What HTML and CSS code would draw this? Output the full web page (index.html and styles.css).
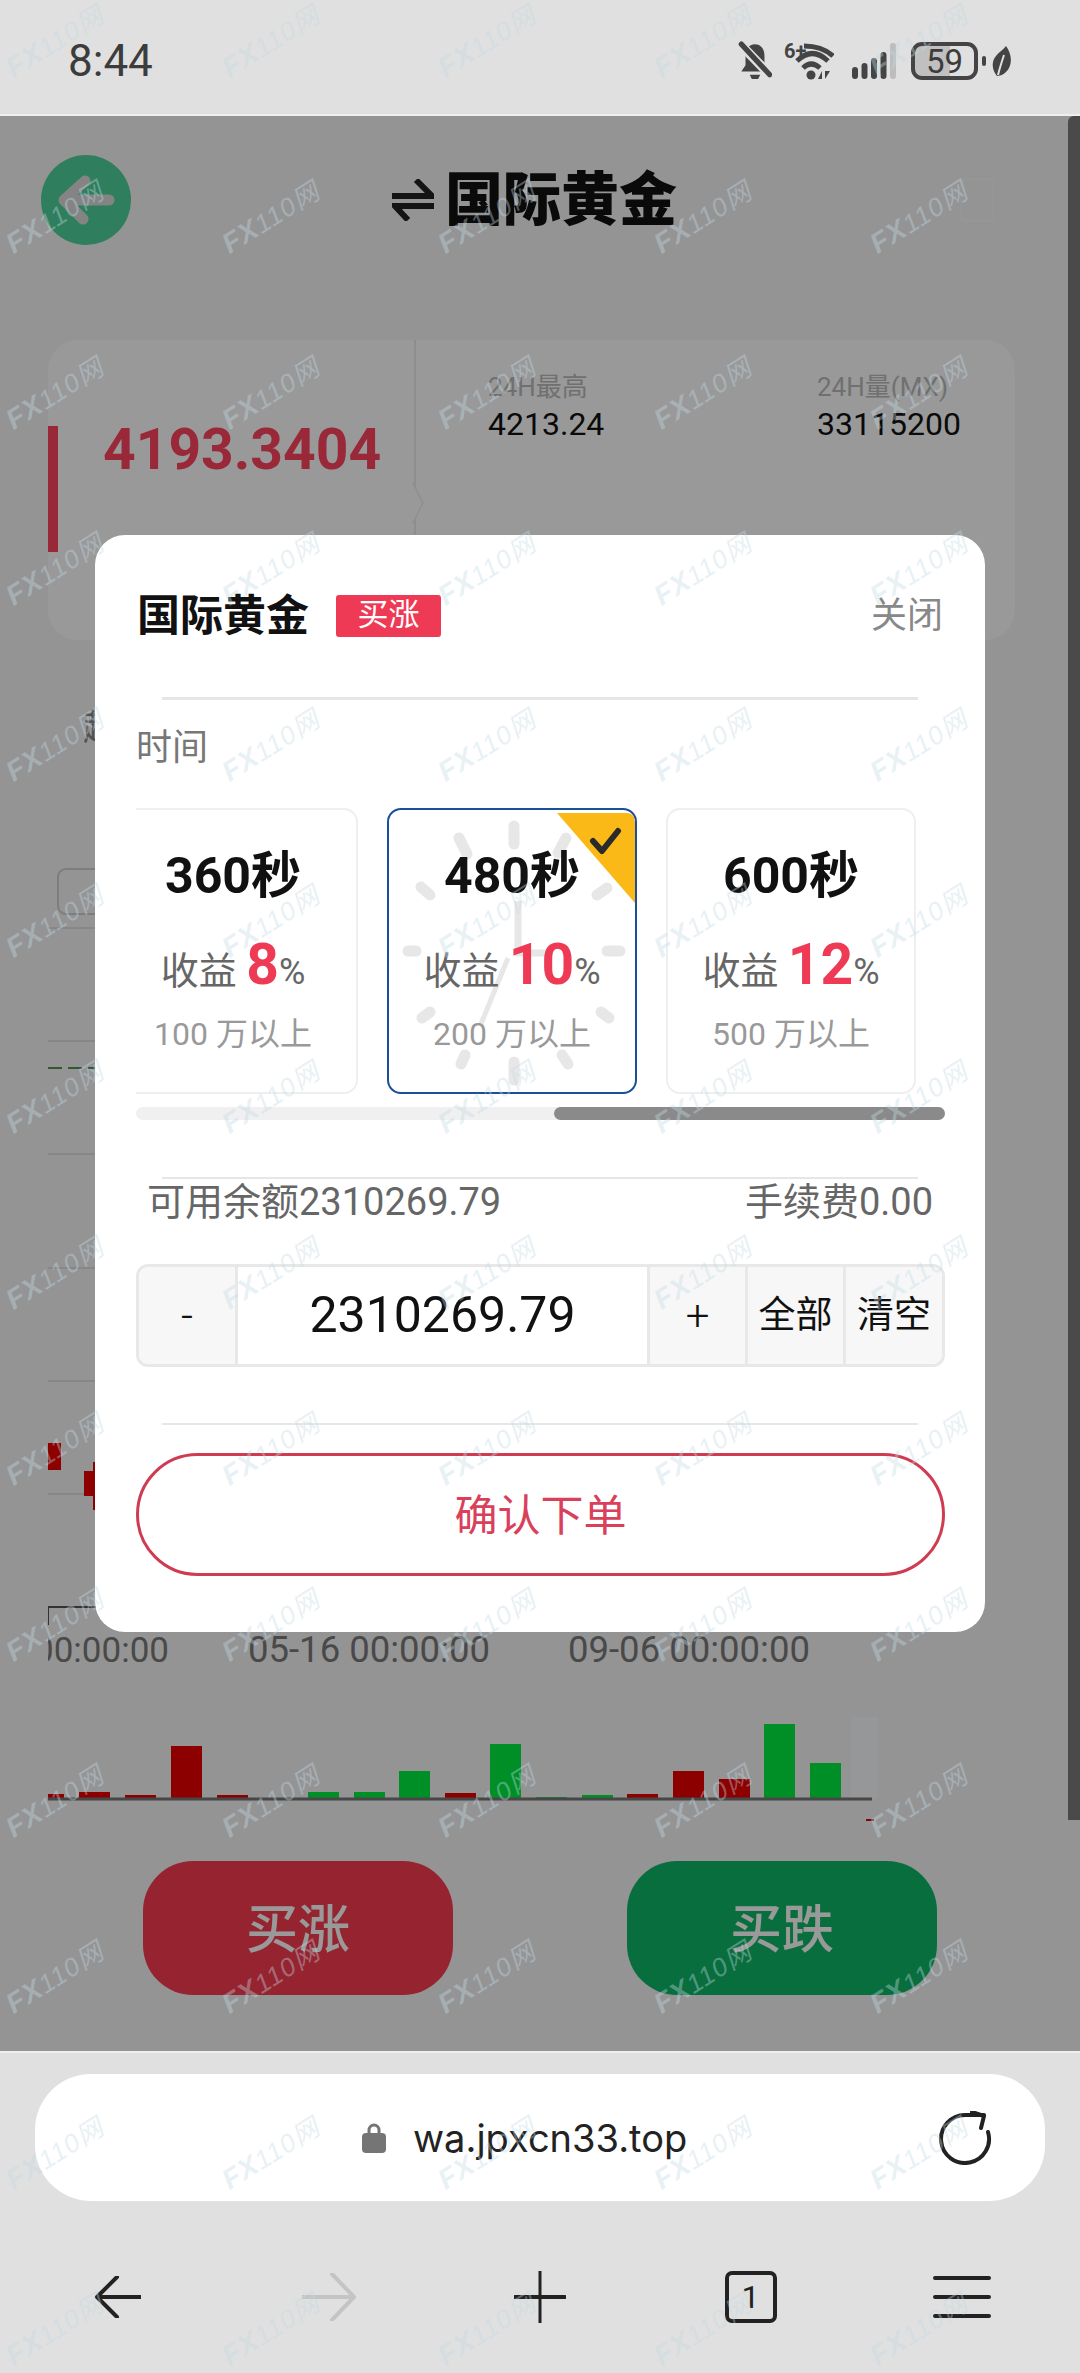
FILE: index.html
```html
<!DOCTYPE html>
<html lang="zh">
<head>
  <meta charset="UTF-8">
  <title>国际黄金</title>
  <link rel="stylesheet" href="styles.css">
</head>
<body>
<div class="phone">

  <div class="status">
    <span class="clock">8:44</span>
    <div class="status-icons">
      <svg class="ic-bell" width="34" height="40" viewBox="0 0 32 38">
        <path d="M16 3c-6 0-9 5-9 11v9l-4 6h26l-4-6v-9c0-6-3-11-9-11z" fill="#444"/>
        <path d="M11 32h10l-2 4h-6z" fill="#444"/>
        <path d="M2 3l28 29" stroke="#e0e0e0" stroke-width="9"/>
        <path d="M3 3l27 29" stroke="#444" stroke-width="5" stroke-linecap="round"/>
      </svg>
      <div class="wifi">
        <span class="wifi-six">6+</span>
        <svg width="50" height="38" viewBox="0 0 50 38" fill="none" stroke="#444" stroke-width="5">
          <path d="M20 4Q38 4 49 14"/>
          <path d="M13 19Q28 4 44 19"/>
          <path d="M19 26Q27 18 36 26"/>
          <circle cx="27" cy="33" r="4.500" fill="#444" stroke="none"/>
          <path d="M34 37L38 29V37z" fill="#444" stroke="none"/>
          <path d="M41 29V37L46 29z" fill="#444" stroke="none"/>
        </svg>
      </div>
      <svg class="ic-signal" width="44" height="36" viewBox="0 0 44 36">
        <rect x="0" y="24" width="6" height="12" rx="3" fill="#444"/>
        <rect x="9.500" y="20" width="6" height="16" rx="3" fill="#444"/>
        <rect x="19" y="15" width="6" height="21" rx="3" fill="#444"/>
        <rect x="28.500" y="9" width="6" height="27" rx="3" fill="#444"/>
        <rect x="38" y="0" width="6" height="36" rx="3" fill="#bdbdbd"/>
      </svg>
      <div class="battery"><span>59</span></div>
      <span class="battery-nub"></span>
      <svg class="ic-leaf" width="20" height="30" viewBox="0 0 20 30">
        <path d="M14 0c6 8 7 19 0 26-3 3-7 4-9 4-5-6-6-14-1-20 3-4 7-6 10-10z" fill="#444"/>
        <path d="M12 9c-2 6-4 12-6 20" stroke="#e0e0e0" stroke-width="2" fill="none"/>
      </svg>
    </div>
  </div>

  <div class="page">
    <div class="topbar">
      <div class="back-btn">
        <svg width="90" height="90" viewBox="0 0 90 90" fill="none" stroke="#dcdcdc" stroke-width="11" stroke-linecap="round" stroke-linejoin="round">
          <path d="M68 45H24"/>
          <path d="M44 26L23 45l19 19"/>
        </svg>
      </div>
      <h1 class="page-title">
        <svg width="42" height="42" viewBox="0 0 42 42" fill="none" stroke="#222" stroke-width="6">
          <path d="M0 17h40L24 1"/>
          <path d="M42 27H3l13 14"/>
        </svg>
        国际黄金
      </h1>
      <span class="fav-icon"></span>
    </div>

    <div class="market">
      <div class="market-left">
        <span class="price-bar"></span>
        <span class="price">4193.3404</span>
      </div>
      <div class="market-stats">
        <div class="stat stat-high">
          <span class="stat-label">24H最高</span>
          <span class="stat-value">4213.24</span>
        </div>
        <div class="stat">
          <span class="stat-label">24H量(MX)</span>
          <span class="stat-value">33115200</span>
        </div>
      </div>
    </div>

    <div class="chart-label">超</div>

    <svg class="chart" width="830" height="980" viewBox="0 0 830 980">
      <rect x="10" y="19" width="200" height="45" rx="8" fill="none" stroke="#d0d0d0" stroke-width="2"/>
      <g stroke="#e2e2e2" stroke-width="2">
        <path d="M0 78H830"/><path d="M0 191H830"/><path d="M0 304H830"/>
        <path d="M0 418H830"/><path d="M0 531H830"/><path d="M0 644H830"/>
      </g>
      <path d="M0 218H200" stroke="#4d9a4d" stroke-width="2" stroke-dasharray="14 6"/>
      <g fill="#ea0000">
        <rect x="0" y="593" width="13" height="27"/>
        <rect x="36" y="621" width="11" height="25"/>
        <rect x="45" y="612" width="2" height="48"/>
      </g>
      <path d="M0 775V757H200" stroke="#555" stroke-width="2" fill="none"/>
      <g class="chart-dates">
        <text class="chart-date-cut" x="121" y="812" text-anchor="end">00:00:00</text>
        <text x="200" y="812">05-16 00:00:00</text>
        <text x="520" y="812">09-06 00:00:00</text>
      </g>
      <rect x="803" y="867" width="43" height="82" fill="#fbfcff"/>
      <g fill="#ea0000">
        <rect x="0" y="944" width="16" height="5"/>
        <rect x="31" y="942" width="31" height="7"/>
        <rect x="77" y="945" width="31" height="4"/>
        <rect x="123" y="896" width="31" height="53"/>
        <rect x="169" y="945" width="31" height="4"/>
        <rect x="397" y="943" width="31" height="6"/>
        <rect x="579" y="944" width="31" height="5"/>
        <rect x="625" y="921" width="31" height="28"/>
        <rect x="671" y="929" width="31" height="20"/>
        <rect x="818" y="969" width="8" height="2"/>
      </g>
      <g fill="#00ee42">
        <rect x="260" y="942" width="31" height="7"/>
        <rect x="306" y="942" width="31" height="7"/>
        <rect x="351" y="921" width="31" height="28"/>
        <rect x="442" y="894" width="31" height="55"/>
        <rect x="488" y="947" width="31" height="2"/>
        <rect x="534" y="945" width="31" height="4"/>
        <rect x="716" y="874" width="31" height="75"/>
        <rect x="762" y="913" width="31" height="36"/>
      </g>
      <path d="M0 949H824" stroke="#777" stroke-width="3"/>
    </svg>

    <div class="trade-btns">
      <button class="trade-btn trade-up">买涨</button>
      <button class="trade-btn trade-down">买跌</button>
    </div>

    <div class="mask"></div>
    <span class="page-scroll"></span>

    <div class="modal">
      <div class="modal-head">
        <span class="modal-title">国际黄金</span>
        <span class="modal-tag">买涨</span>
        <span class="modal-close">关闭</span>
      </div>
      <div class="rule"></div>
      <div class="time-label">时间</div>

      <div class="periods">
        <div class="period period-first">
          <div class="period-time">360秒</div>
          <div class="period-rate">收益 <b>8</b><small>%</small></div>
          <div class="period-min">100 万以上</div>
        </div>
        <div class="period period-on">
          <svg class="period-bg" width="246" height="282" viewBox="0 0 246 282">
            <g stroke="#e7e7e7" stroke-width="11" stroke-linecap="round" fill="none">
              <path d="M125 16V34"/><path d="M125 252V270"/>
              <path d="M19 141H27"/><path d="M218 141H231"/>
              <path d="M70 28L78 44"/><path d="M32 77L41 85"/>
              <path d="M208 85L218 78"/><path d="M177 28L169 43"/>
              <path d="M33 208L41 202"/><path d="M212 202L220 208"/>
              <path d="M76 245L72 254"/><path d="M173 245L179 254"/>
            </g>
            <g stroke="#e7e7e7" fill="none">
              <path d="M129 91V143H160" stroke-width="7"/>
              <path d="M119 148L92 214" stroke-width="5"/>
            </g>
            <path d="M168 3H238a8 8 0 0 1 8 8V93z" fill="#fbb917"/>
            <path d="M204 31l9 10 16-20" fill="none" stroke="#2a2a2a" stroke-width="6" stroke-linecap="round" stroke-linejoin="round"/>
          </svg>
          <div class="period-time">480秒</div>
          <div class="period-rate">收益 <b>10</b><small>%</small></div>
          <div class="period-min">200 万以上</div>
        </div>
        <div class="period">
          <div class="period-time">600秒</div>
          <div class="period-rate">收益 <b>12</b><small>%</small></div>
          <div class="period-min">500 万以上</div>
        </div>
      </div>
      <div class="periods-track"><span class="periods-thumb"></span></div>

      <div class="rule rule-thin rule-funds"></div>
      <div class="funds">
        <span>可用余额2310269.79</span>
        <span>手续费0.00</span>
      </div>

      <div class="amount">
        <span class="amount-btn amount-sign">-</span>
        <span class="amount-value">2310269.79</span>
        <span class="amount-btn amount-sign">+</span>
        <span class="amount-btn">全部</span>
        <span class="amount-btn">清空</span>
      </div>

      <div class="rule rule-thin rule-confirm"></div>
      <button class="confirm">确认下单</button>
    </div>
  </div>

  <div class="browser">
    <div class="urlbar">
      <svg width="24" height="30" viewBox="0 0 24 30">
        <path d="M7 13V7a5 5 0 0 1 10 0v6" fill="none" stroke="#757575" stroke-width="3"/>
        <rect x="0" y="10" width="24" height="20" rx="4" fill="#757575"/>
      </svg>
      <span class="url">wa.jpxcn33.top</span>
      <svg class="reload" width="54" height="54" viewBox="0 0 54 54" fill="none" stroke="#222" stroke-width="4" stroke-linecap="round" stroke-linejoin="round">
        <path d="M50 21A24 24 0 1 1 27 4H46"/>
        <path d="M34 1L46 5L43 17"/>
      </svg>
    </div>
    <div class="toolbar">
      <svg width="46" height="42" viewBox="0 0 46 42" fill="none" stroke="#222" stroke-width="4" stroke-linecap="round" stroke-linejoin="round">
        <path d="M46 21H3"/><path d="M22 1L2 21l20 20"/>
      </svg>
      <svg width="54" height="48" viewBox="0 0 54 48" fill="none" stroke="#c4c4c4" stroke-width="4" stroke-linecap="round" stroke-linejoin="round">
        <path d="M0 24H51"/><path d="M30 1l22 23-22 23"/>
      </svg>
      <svg width="52" height="52" viewBox="0 0 52 52" fill="none" stroke="#222" stroke-linecap="round">
        <path d="M26 0V52" stroke-width="3"/><path d="M1 26H51" stroke-width="4"/>
      </svg>
      <div class="tab-count">1</div>
      <svg width="58" height="44" viewBox="0 0 58 44" fill="none" stroke="#222" stroke-width="4" stroke-linecap="round">
        <path d="M2 3H56"/><path d="M2 22H56"/><path d="M2 41H56"/>
      </svg>
    </div>
  </div>

  <div class="watermarks">
    <span class="wm"><b>FX</b>110网</span><span class="wm"><b>FX</b>110网</span><span class="wm"><b>FX</b>110网</span><span class="wm"><b>FX</b>110网</span><span class="wm"><b>FX</b>110网</span>
    <span class="wm"><b>FX</b>110网</span><span class="wm"><b>FX</b>110网</span><span class="wm"><b>FX</b>110网</span><span class="wm"><b>FX</b>110网</span><span class="wm"><b>FX</b>110网</span>
    <span class="wm"><b>FX</b>110网</span><span class="wm"><b>FX</b>110网</span><span class="wm"><b>FX</b>110网</span><span class="wm"><b>FX</b>110网</span><span class="wm"><b>FX</b>110网</span>
    <span class="wm"><b>FX</b>110网</span><span class="wm"><b>FX</b>110网</span><span class="wm"><b>FX</b>110网</span><span class="wm"><b>FX</b>110网</span><span class="wm"><b>FX</b>110网</span>
    <span class="wm"><b>FX</b>110网</span><span class="wm"><b>FX</b>110网</span><span class="wm"><b>FX</b>110网</span><span class="wm"><b>FX</b>110网</span><span class="wm"><b>FX</b>110网</span>
    <span class="wm"><b>FX</b>110网</span><span class="wm"><b>FX</b>110网</span><span class="wm"><b>FX</b>110网</span><span class="wm"><b>FX</b>110网</span><span class="wm"><b>FX</b>110网</span>
    <span class="wm"><b>FX</b>110网</span><span class="wm"><b>FX</b>110网</span><span class="wm"><b>FX</b>110网</span><span class="wm"><b>FX</b>110网</span><span class="wm"><b>FX</b>110网</span>
    <span class="wm"><b>FX</b>110网</span><span class="wm"><b>FX</b>110网</span><span class="wm"><b>FX</b>110网</span><span class="wm"><b>FX</b>110网</span><span class="wm"><b>FX</b>110网</span>
    <span class="wm"><b>FX</b>110网</span><span class="wm"><b>FX</b>110网</span><span class="wm"><b>FX</b>110网</span><span class="wm"><b>FX</b>110网</span><span class="wm"><b>FX</b>110网</span>
    <span class="wm"><b>FX</b>110网</span><span class="wm"><b>FX</b>110网</span><span class="wm"><b>FX</b>110网</span><span class="wm"><b>FX</b>110网</span><span class="wm"><b>FX</b>110网</span>
    <span class="wm"><b>FX</b>110网</span><span class="wm"><b>FX</b>110网</span><span class="wm"><b>FX</b>110网</span><span class="wm"><b>FX</b>110网</span><span class="wm"><b>FX</b>110网</span>
    <span class="wm"><b>FX</b>110网</span><span class="wm"><b>FX</b>110网</span><span class="wm"><b>FX</b>110网</span><span class="wm"><b>FX</b>110网</span><span class="wm"><b>FX</b>110网</span>
    <span class="wm"><b>FX</b>110网</span><span class="wm"><b>FX</b>110网</span><span class="wm"><b>FX</b>110网</span><span class="wm"><b>FX</b>110网</span><span class="wm"><b>FX</b>110网</span>
    <span class="wm"><b>FX</b>110网</span><span class="wm"><b>FX</b>110网</span><span class="wm"><b>FX</b>110网</span><span class="wm"><b>FX</b>110网</span><span class="wm"><b>FX</b>110网</span>
  </div>

</div>
</body>
</html>
```

FILE: styles.css
```css
* {
  box-sizing: border-box;
}
body {
  margin: 0;
  font-family: Roboto, "Noto Sans CJK SC", sans-serif;
  color: #111;
}
button {
  font-family: inherit;
  border: none;
  padding: 0;
}
.phone {
  position: relative;
  width: 1080px;
  height: 2373px;
  overflow: hidden;
  display: flex;
  flex-direction: column;
  background: #e0e0e0;
}

/* status bar */
.status {
  flex: none;
  height: 116px;
  border-bottom: 2px solid #efefef;
  padding: 8px 68px 0;
  display: flex;
  justify-content: space-between;
  align-items: center;
}
.clock {
  font-size: 44px;
  color: #3c3c3c;
}
.status-icons {
  display: flex;
  align-items: center;
}
.wifi {
  display: flex;
  align-items: flex-start;
  margin-left: 12px;
  position: relative;
  width: 50px;
  height: 38px;
}
.wifi-six {
  position: absolute;
  left: 0;
  top: -3px;
  font-size: 20px;
  font-weight: 700;
  color: #444;
}
.ic-signal {
  margin-left: 18px;
}
.battery {
  width: 67px;
  height: 38px;
  margin-left: 15px;
  border: 4px solid #444;
  border-radius: 11px;
  background: linear-gradient(90deg, #c0c0c0 59%, transparent 59%);
  display: flex;
  align-items: center;
  justify-content: center;
  font-size: 33px;
  color: #3c3c3c;
}
.battery-nub {
  width: 4px;
  height: 10px;
  margin-left: 4px;
  border-radius: 2px;
  background: #444;
}
.ic-leaf {
  margin-left: 6px;
}

/* page under the dialog */
.page {
  position: relative;
  flex: none;
  height: 1935px;
  background: #f7f7f8;
  padding-top: 39px;
}
.topbar {
  display: flex;
  align-items: center;
  height: 90px;
  padding-left: 41px;
}
.back-btn {
  width: 90px;
  height: 90px;
  border-radius: 50%;
  background: #4fd39c;
}
.page-title {
  margin: 0 0 0 261px;
  font-size: 58px;
  line-height: 70px;
  font-weight: 900;
  display: flex;
  align-items: center;
  gap: 11px;
}
.fav-icon {
  width: 34px;
  height: 44px;
  margin-left: 283px;
  border: 2px solid #fbfbfb;
  border-radius: 6px;
}
.market {
  display: flex;
  width: 967px;
  height: 300px;
  margin: 95px 0 0 48px;
  background: #fff;
  border-radius: 30px;
}
.market-left {
  position: relative;
  width: 368px;
  border-right: 2px solid #ededed;
  display: flex;
}
.market-left::after {
  content: "";
  position: absolute;
  right: -14px;
  top: 148px;
  width: 28px;
  height: 28px;
  background: #fff;
  border-top: 2px solid #ededed;
  border-right: 2px solid #ededed;
  transform: scaleX(.5) rotate(45deg);
}
.price-bar {
  width: 10px;
  height: 126px;
  margin-top: 86px;
  background: #ff4460;
}
.price {
  margin: 74px 0 0 45px;
  font-size: 57px;
  line-height: 72px;
  font-weight: 700;
  color: #ff4460;
}
.market-stats {
  display: flex;
  padding: 28px 0 0 72px;
}
.stat {
  display: flex;
  flex-direction: column;
}
.stat-high {
  width: 329px;
}
.stat-label {
  font-size: 26px;
  line-height: 38px;
  color: #bbb;
}
.stat-value {
  font-size: 32px;
  line-height: 36px;
}
.chart-label {
  margin: 68px 0 0 83px;
  font-size: 36px;
  line-height: 40px;
  color: #888;
}
.chart {
  display: block;
  margin: 102px 0 0 48px;
}
.chart-dates {
  font-size: 36.500px;
  fill: #7b7b7b;
}
.chart-date-cut {
  font-size: 35px;
}
.trade-btns {
  display: flex;
  gap: 174px;
  margin: 31px 0 0 143px;
}
.trade-btn {
  width: 310px;
  height: 134px;
  padding-bottom: 6px;
  border-radius: 50px;
  font-size: 52px;
  font-weight: 500;
  color: #fff;
}
.trade-up {
  background: #f83c50;
}
.trade-down {
  background: #10b768;
}
.mask {
  position: absolute;
  inset: 0;
  background: rgba(0, 0, 0, .4);
}
.page-scroll {
  position: absolute;
  right: 0;
  top: 0;
  width: 12px;
  height: 1704px;
  border-radius: 6px 0 0 0;
  background: #4a4a4a;
}

/* order dialog */
.modal {
  position: absolute;
  left: 95px;
  top: 419px;
  width: 890px;
  height: 1097px;
  background: #fff;
  border-radius: 30px;
}
.modal-head {
  display: flex;
  align-items: center;
  height: 162px;
  padding: 0 42px 8px;
}
.modal-title {
  font-size: 43px;
  font-weight: 700;
}
.modal-tag {
  margin: 8px 0 0 27px;
  width: 105px;
  height: 42px;
  line-height: 40px;
  text-align: center;
  border-radius: 3px;
  background: #ef3a55;
  color: #fff;
  font-size: 31px;
}
.modal-close {
  margin-left: auto;
  font-size: 36px;
  color: #888;
}
.rule {
  height: 3px;
  margin: 0 67px;
  background: #e6e6e6;
}
.rule-thin {
  height: 2px;
}
.rule-funds {
  margin-top: 57px;
}
.rule-confirm {
  margin-top: 56px;
}
.time-label {
  height: 94px;
  line-height: 96px;
  padding-left: 41px;
  font-size: 36px;
  color: #777;
}
.periods {
  display: flex;
  gap: 29px;
  width: 809px;
  margin: 14px 0 0 41px;
  overflow: hidden;
}
.period {
  position: relative;
  flex: none;
  width: 250px;
  height: 286px;
  border: 2px solid #efefef;
  border-radius: 14px;
  text-align: center;
  overflow: hidden;
}
.period-first {
  margin-left: -28px;
}
.period-on {
  border-color: #1a4f9c;
}
.period-bg {
  position: absolute;
  left: 0;
  top: 0;
}
.period-time,
.period-rate,
.period-min {
  position: relative;
}
.period-time {
  margin-top: 38px;
  font-size: 50px;
  line-height: 56px;
  font-weight: 700;
}
.period-rate {
  margin-top: 26px;
  font-size: 38px;
  line-height: 70px;
  color: #666;
  white-space: nowrap;
}
.period-rate b {
  font-size: 57px;
  color: #ef3a55;
}
.period-rate small {
  font-size: 36px;
}
.period-min {
  margin-top: 7px;
  font-size: 32px;
  line-height: 40px;
  color: #999;
}
.periods-track {
  height: 13px;
  margin: 13px 0 0 41px;
  width: 809px;
  border-radius: 7px;
  background: #f0f0f0;
  display: flex;
}
.periods-thumb {
  width: 391px;
  margin-left: 418px;
  border-radius: 7px;
  background: #8a8a8a;
}
.funds {
  display: flex;
  justify-content: space-between;
  height: 42px;
  line-height: 46px;
  padding: 0 52px;
  font-size: 38px;
  color: #666;
}
.amount {
  display: grid;
  grid-template-columns: 99px 409px 98px 98px 1fr;
  height: 103px;
  margin: 43px 40px 0 41px;
  border: 3px solid #e8e8e8;
  border-radius: 12px;
  overflow: hidden;
  text-align: center;
  line-height: 97px;
}
.amount-btn {
  background: #f7f7f7;
  font-size: 37px;
  border-left: 3px solid #e8e8e8;
}
.amount-btn:first-child {
  border-left: none;
  border-right: 3px solid #e8e8e8;
}
.amount-sign {
  font-size: 42px;
  font-weight: 300;
}
.amount-value {
  font-size: 50px;
}
.confirm {
  display: block;
  width: 809px;
  height: 123px;
  margin: 28px 41px 0;
  padding-bottom: 6px;
  background: #fff;
  border: 3px solid #cf3c52;
  border-radius: 62px;
  font-size: 43px;
  color: #d9405a;
}

/* browser chrome */
.browser {
  flex: 1;
  border-top: 2px solid #efefef;
}
.urlbar {
  display: flex;
  align-items: center;
  height: 127px;
  margin: 21px 35px 0;
  padding-left: 327px;
  border-radius: 56px;
  background: #fff;
}
.url {
  margin-left: 27px;
  font-family: Inter, Roboto, sans-serif;
  font-size: 38px;
  color: #222;
}
.reload {
  margin-left: auto;
  margin-right: 53px;
}
.toolbar {
  display: grid;
  grid-template-columns: repeat(5, 211px);
  justify-items: center;
  align-items: center;
  height: 52px;
  margin: 70px 0 0 12px;
}
.tab-count {
  width: 52px;
  height: 52px;
  border: 4px solid #222;
  border-radius: 7px;
  text-align: center;
  font-size: 32px;
  line-height: 44px;
  color: #222;
}

/* watermark over everything */
.watermarks {
  position: absolute;
  left: -54px;
  top: -49px;
  display: grid;
  grid-template-columns: repeat(5, 216px);
  grid-auto-rows: 176px;
  place-items: center;
  pointer-events: none;
}
.wm {
  transform: rotate(-32deg);
  font-family: "Liberation Sans", "Noto Sans CJK SC", sans-serif;
  font-size: 26px;
  font-style: italic;
  letter-spacing: 1px;
  white-space: nowrap;
  color: rgba(195, 218, 228, .4);
}
.wm b {
  font-size: 28px;
}
```
